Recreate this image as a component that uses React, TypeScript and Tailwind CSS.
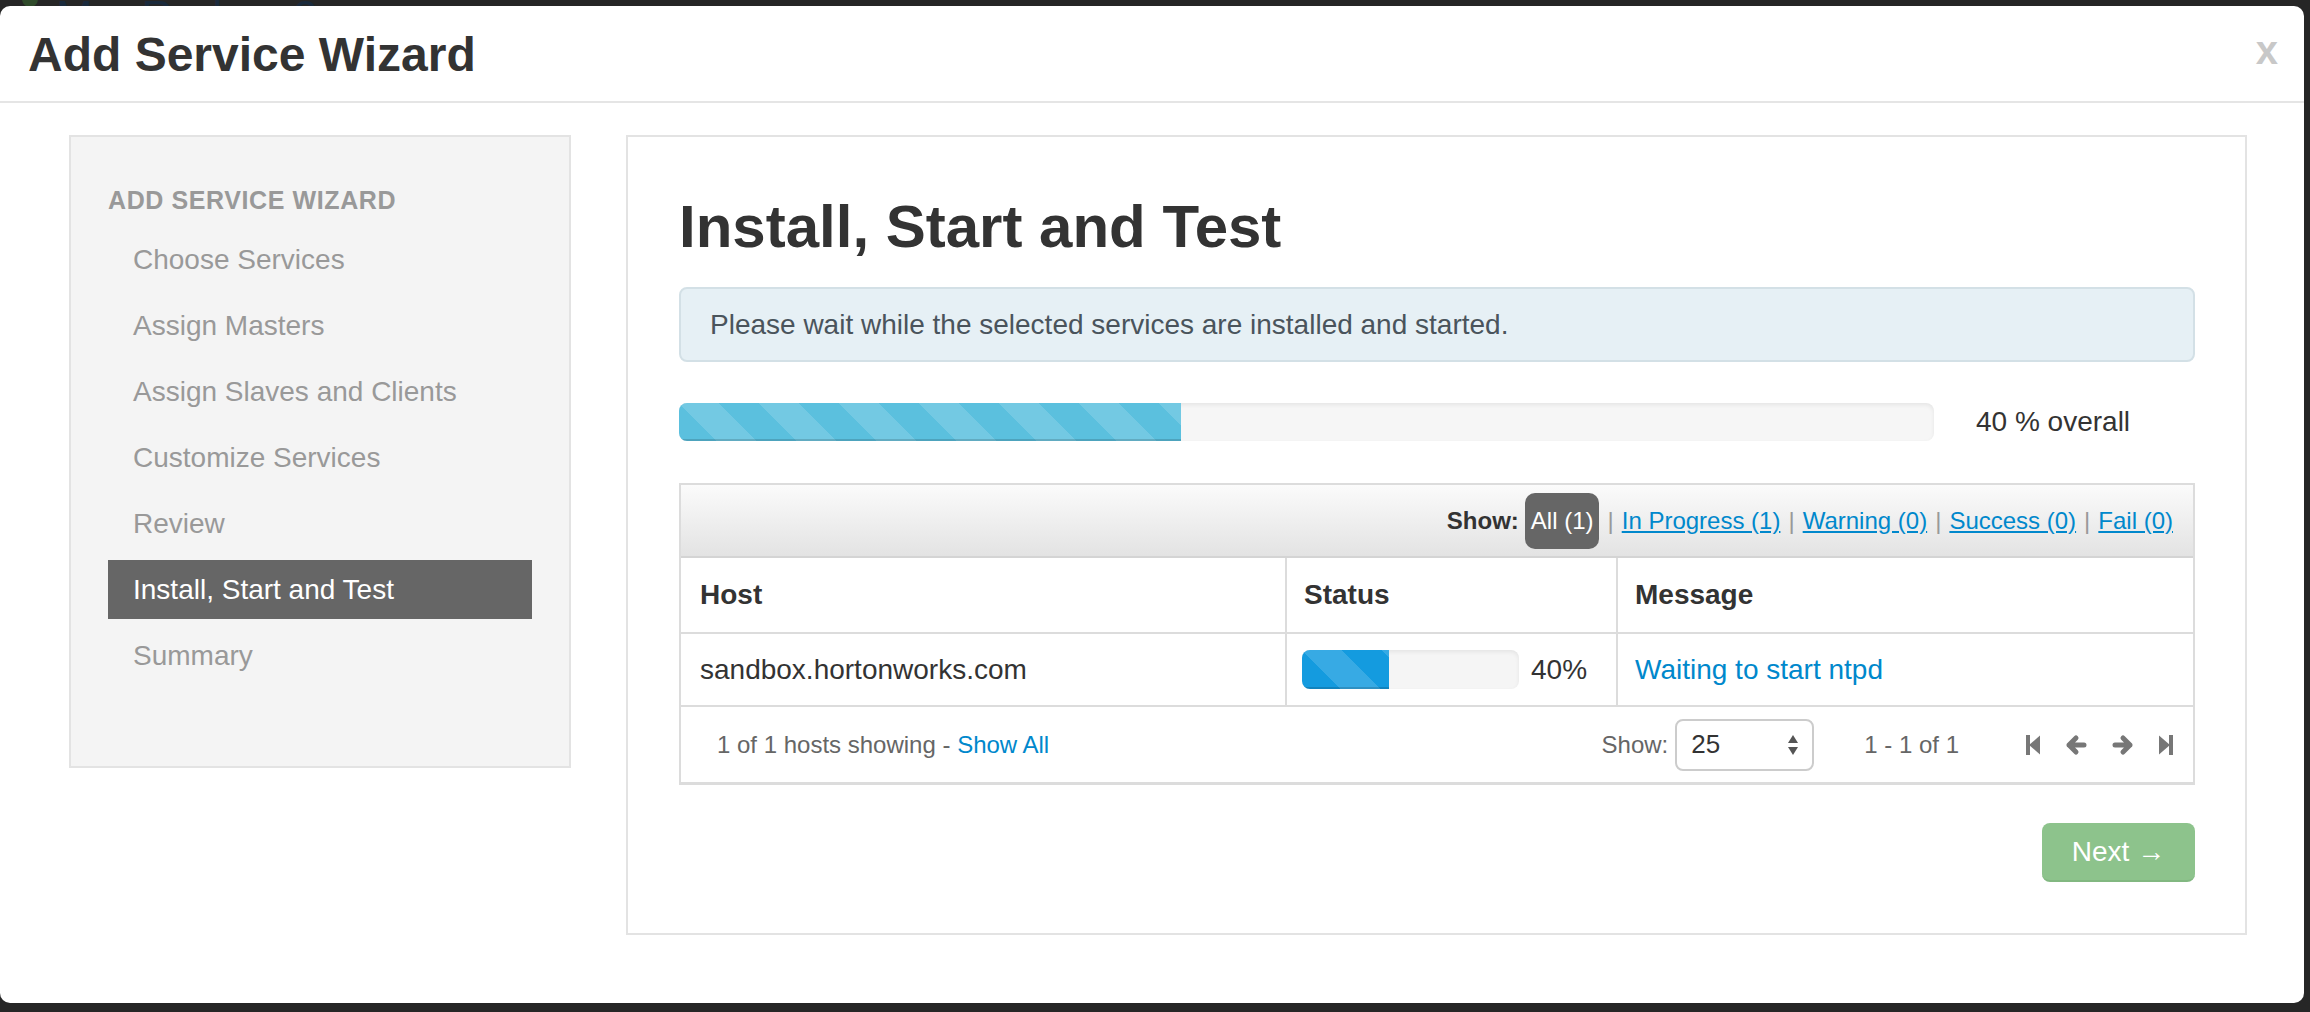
import React from "react";

const steps = [
  "Choose Services",
  "Assign Masters",
  "Assign Slaves and Clients",
  "Customize Services",
  "Review",
  "Install, Start and Test",
  "Summary",
];
const activeStep = 5;

const filters = ["In Progress (1)", "Warning (0)", "Success (0)", "Fail (0)"];

const stripes =
  "bg-[linear-gradient(45deg,rgba(255,255,255,0.15)_25%,transparent_25%,transparent_50%,rgba(255,255,255,0.15)_50%,rgba(255,255,255,0.15)_75%,transparent_75%,transparent)] bg-[length:80px_80px]";

function StepBackward() {
  return (
    <svg width="14" height="22" viewBox="0 0 14 22" fill="#777">
      <rect x="0" y="1" width="4" height="20" />
      <polygon points="3,11 14,1.5 14,20.5" />
    </svg>
  );
}

function StepForward() {
  return (
    <svg width="14" height="22" viewBox="0 0 14 22" fill="#777">
      <polygon points="0,1.5 11,11 0,20.5" />
      <rect x="10" y="1" width="4" height="20" />
    </svg>
  );
}

function ArrowLeft() {
  return (
    <svg width="22" height="22" viewBox="0 0 22 22" fill="none" stroke="#777" strokeWidth="5" strokeLinecap="round" strokeLinejoin="round">
      <path d="M11 4 L4 11 L11 18 M4 11 H19" />
    </svg>
  );
}

function ArrowRight() {
  return (
    <svg width="22" height="22" viewBox="0 0 22 22" fill="none" stroke="#777" strokeWidth="5" strokeLinecap="round" strokeLinejoin="round">
      <path d="M11 4 L18 11 L11 18 M18 11 H3" />
    </svg>
  );
}

function SelectArrows() {
  return (
    <svg width="10" height="22" viewBox="0 0 10 22" fill="#555">
      <polygon points="0,9 5,1 10,9" />
      <polygon points="0,13 10,13 5,21" />
    </svg>
  );
}

function Sidebar() {
  return (
    <div className="w-[502px] h-[633px] shrink-0 bg-[#f4f4f4] border-2 border-[#e3e3e3] pt-[43px] px-[37px]">
      <div className="h-[40px] leading-[40px] text-[25px] tracking-[0.6px] font-bold text-[#999] uppercase">
        Add Service Wizard
      </div>
      <ul className="mt-[10px] flex flex-col gap-[7px]">
        {steps.map((s, i) => (
          <li
            key={s}
            className={
              i === activeStep
                ? "h-[59px] flex items-center pl-[25px] text-[28px] bg-[#666] text-white"
                : "h-[59px] flex items-center pl-[25px] text-[28px] text-[#999]"
            }
          >
            {s}
          </li>
        ))}
      </ul>
    </div>
  );
}

function HostsTable() {
  return (
    <div className="mt-[42px] border-2 border-b-[3px] border-[#dcdcdc]">
      {/* filter bar */}
      <div className="h-[73px] border-b-2 border-[#d4d4d4] bg-linear-to-b from-[#fbfbfb] to-[#e3e3e3] flex items-center justify-end pr-[20px] text-[24px]">
        <span className="font-bold text-[#333]">Show:</span>
        <span className="ml-[6px] h-[56px] px-[6px] rounded-[10px] bg-[#666] text-white flex items-center">
          All (1)
        </span>
        {filters.map((f) => (
          <React.Fragment key={f}>
            <span className="mx-[8px] text-[#999]">|</span>
            <a className="text-[#0088cc] underline">{f}</a>
          </React.Fragment>
        ))}
      </div>

      {/* header */}
      <div className="flex h-[76px] border-b-2 border-[#dcdcdc] text-[28px] font-bold text-[#333]">
        <div className="w-[606px] border-r-2 border-[#dcdcdc] flex items-center px-[19px]">Host</div>
        <div className="w-[331px] border-r-2 border-[#dcdcdc] flex items-center px-[17px]">Status</div>
        <div className="flex-1 flex items-center px-[17px]">Message</div>
      </div>

      {/* row */}
      <div className="flex h-[73px] border-b-2 border-[#dcdcdc] text-[28px] text-[#333]">
        <div className="w-[606px] border-r-2 border-[#dcdcdc] flex items-center px-[19px]">
          sandbox.hortonworks.com
        </div>
        <div className="w-[331px] border-r-2 border-[#dcdcdc] flex items-center px-[15px]">
          <div className="w-[217px] h-[39px] rounded-[8px] bg-[#f5f5f5] shadow-[inset_0_2px_4px_rgba(0,0,0,0.07)] overflow-hidden">
            <div
              style={{ width: "40%" }}
              className={`h-full bg-[#149bdf] ${stripes} shadow-[inset_0_-2px_0_rgba(0,0,0,0.15)]`}
            />
          </div>
          <span className="ml-[12px]">40%</span>
        </div>
        <div className="flex-1 flex items-center px-[17px]">
          <a className="text-[#0088cc]">Waiting to start ntpd</a>
        </div>
      </div>

      {/* footer */}
      <div className="h-[75px] flex items-center pl-[36px] pr-[20px] text-[24px] text-[#666]">
        <span>
          1 of 1 hosts showing - <a className="text-[#0088cc]">Show All</a>
        </span>
        <div className="ml-auto flex items-center">
          <span>Show:</span>
          <div className="ml-[7px] w-[139px] h-[52px] rounded-[8px] border-2 border-[#ccc] bg-white flex items-center justify-between pl-[14px] pr-[14px] text-[26px] text-[#333]">
            <span>25</span>
            <SelectArrows />
          </div>
          <span className="ml-[50px]">1 - 1 of 1</span>
          <div className="ml-[67px] flex items-center gap-[25px]">
            <StepBackward />
            <ArrowLeft />
            <ArrowRight />
            <StepForward />
          </div>
        </div>
      </div>
    </div>
  );
}

function MainPanel() {
  return (
    <div className="w-[1621px] shrink-0 border-2 border-[#e3e3e3] pt-[57px] pl-[51px] pr-[50px] pb-[51px]">
      <h2 className="h-[66px] leading-[66px] text-[60px] font-bold text-[#333]">Install, Start and Test</h2>

      <div className="mt-[27px] h-[75px] rounded-[8px] border-2 border-[#d3e0e6] bg-[#e6f0f5] flex items-center pl-[29px] text-[28px] text-[#4a545c]">
        Please wait while the selected services are installed and started.
      </div>

      <div className="mt-[41px] h-[38px] flex items-center">
        <div className="w-[1255px] h-[38px] rounded-[8px] bg-[#f6f6f6] shadow-[inset_0_2px_4px_rgba(0,0,0,0.07)] overflow-hidden">
          <div
            style={{ width: "40%" }}
            className={`h-full bg-[#5bc0de] ${stripes} shadow-[inset_0_-2px_0_rgba(0,0,0,0.15)]`}
          />
        </div>
        <span className="ml-[42px] text-[28px] text-[#333]">40 % overall</span>
      </div>

      <HostsTable />

      <div className="mt-[38px] flex justify-end">
        <button className="w-[153px] h-[59px] rounded-[8px] bg-[#8dc38c] border-b-2 border-[#82b881] text-white text-[28px] flex items-center justify-center">
          Next →
        </button>
      </div>
    </div>
  );
}

export default function App() {
  return (
    <div className="w-[2310px] h-[1012px] overflow-hidden bg-[#262626] font-['Liberation_Sans',Arial,sans-serif] text-[#333]">
      {/* page behind the modal, barely visible */}
      <div className="h-[6px] overflow-hidden flex items-start pl-[22px] gap-[18px]">
        <div className="w-[16px] h-[16px] rounded-full bg-[#2f4a2a] -mt-[9px]" />
        <span className="text-[44px] leading-none text-[#1a2a3c] -mt-[5px]">MapReduce2</span>
      </div>

      <div className="w-[2304px] h-[997px] bg-white rounded-[10px] overflow-hidden flex flex-col">
        <div className="h-[97px] shrink-0 border-b-2 border-[#e5e5e5] flex items-center justify-between pl-[28px] pr-[26px] pt-[3px]">
          <h1 className="text-[48px] font-bold leading-none text-[#333]">Add Service Wizard</h1>
          <span className="text-[40px] font-bold leading-none text-[#c8c8c8] mb-[10px]">x</span>
        </div>

        <div className="flex items-start pt-[32px] pl-[69px] gap-[55px]">
          <Sidebar />
          <MainPanel />
        </div>
      </div>
    </div>
  );
}
